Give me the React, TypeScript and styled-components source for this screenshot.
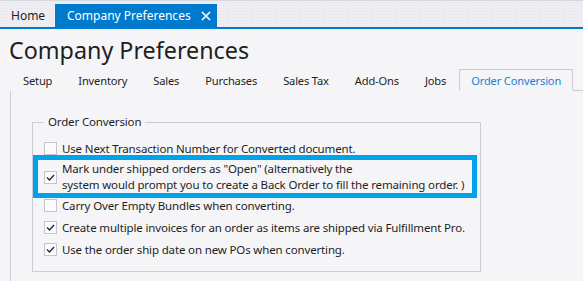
import React from "react";
import styled, { createGlobalStyle } from "styled-components";

const GlobalStyle = createGlobalStyle`
	body {
		margin: 0;
		background-color: #f5f5f7;
		font-family: "Noto Sans", "Open Sans", sans-serif;
		color: #1e1e1e;
		overflow: hidden;
		white-space: nowrap;
	}
`;

const subTabs = ["Setup", "Inventory", "Sales", "Purchases", "Sales Tax", "Add-Ons", "Jobs", "Order Conversion"];

const Check = ({ checked }: { checked: boolean }) => (
	<Box>
		{checked && (
			<svg width='11' height='11' viewBox='0 0 11 11'>
				<polyline points='2,5.5 4.5,8 9,3' fill='none' stroke='#2b2b2b' strokeWidth='1.4' />
			</svg>
		)}
	</Box>
);

const App = () => {
	return (
		<Page>
			<GlobalStyle />
			<TopBar>
				<DocTab>Home</DocTab>
				<DocTab active>
					Company Preferences
					<svg width='10' height='10' viewBox='0 0 10 10'>
						<path d='M1 1 L9 9 M9 1 L1 9' stroke='white' strokeWidth='1.6' />
					</svg>
				</DocTab>
			</TopBar>

			<Title>Company Preferences</Title>

			<TabRow>
				{subTabs.map((t) => (
					<SubTab key={t} active={t === "Order Conversion"}>
						{t}
					</SubTab>
				))}
			</TabRow>

			<Panel>
				<Group>
					<Legend>Order Conversion</Legend>
					<Row>
						<Check checked={false} />
						<span>Use Next Transaction Number for Converted document.</span>
					</Row>
					<Highlight>
						<Check checked />
						<span>
							Mark under shipped orders as "Open" (alternatively the
							<br />
							system would prompt you to create a Back Order to fill the remaining order. )
						</span>
					</Highlight>
					<Row>
						<Check checked={false} />
						<span>Carry Over Empty Bundles when converting.</span>
					</Row>
					<Row>
						<Check checked />
						<span>Create multiple invoices for an order as items are shipped via Fulfillment Pro.</span>
					</Row>
					<Row>
						<Check checked />
						<span>Use the order ship date on new POs when converting.</span>
					</Row>
				</Group>
			</Panel>
		</Page>
	);
};

export default App;

const Page = styled.div`
	width: 583px;
	height: 281px;
	display: flex;
	flex-direction: column;
	font-size: 11.5px;
	letter-spacing: -0.15px;
`;

const TopBar = styled.div`
	height: 26px;
	flex-shrink: 0;
	border-top: 1px solid #d6d6de;
	border-bottom: 2px solid #007acc;
	background-color: #eeeef2;
	background-image: radial-gradient(#e2e2e8 0.6px, transparent 0.6px);
	background-size: 3px 3px;
	display: flex;
	align-items: flex-end;
`;

const DocTab = styled.div<{ active?: boolean }>`
	height: 23px;
	display: flex;
	align-items: center;
	justify-content: space-between;
	padding: 0 ${(p) => (p.active ? "6px" : "12px")} 0 ${(p) => (p.active ? "12px" : "11px")};
	width: ${(p) => (p.active ? "162px" : "55px")};
	box-sizing: border-box;
	font-size: 12px;
	letter-spacing: 0;
	background-color: ${(p) => (p.active ? "#007acc" : "transparent")};
	color: ${(p) => (p.active ? "white" : "#1e1e1e")};
`;

const Title = styled.h1`
	margin: 5px 0 0 9px;
	font-size: 23.3px;
	font-weight: 400;
	letter-spacing: 0;
	line-height: 32px;
	color: #1e1e1e;
`;

const TabRow = styled.div`
	display: flex;
	margin: 3px 0 0 10px;
	height: 22px;
	flex-shrink: 0;
	position: relative;
	z-index: 1;
`;

const SubTab = styled.div<{ active?: boolean }>`
	padding: 0 ${(p) => (p.active ? "11px" : "12px")};
	display: flex;
	align-items: center;
	font-size: 11.1px;
	color: ${(p) => (p.active ? "#1a7fd0" : "#1e1e1e")};
	border: 1px solid ${(p) => (p.active ? "#ccccd6" : "transparent")};
	border-bottom: 1px solid ${(p) => (p.active ? "#f5f5f7" : "transparent")};
	background-color: #f5f5f7;
`;

const Panel = styled.div`
	flex: 1;
	margin: -1px 0 0 10px;
	border-top: 1px solid #ccccd6;
	border-left: 1px solid #ccccd6;
	padding: 23px 0 0 21px;
`;

const Group = styled.fieldset`
	width: 449px;
	box-sizing: border-box;
	height: 158px;
	margin: 0;
	padding: 7px 0 0 2px;
	border: 1px solid #ccccd6;
	display: flex;
	flex-direction: column;
`;

const Legend = styled.legend`
	padding: 0 4px;
	margin-left: 9px;
	line-height: 16px;
`;

const Row = styled.label`
	display: flex;
	align-items: center;
	flex-shrink: 0;
	gap: 5px;
	height: 22px;
	padding-left: 9px;
`;

const Highlight = styled.div`
	display: flex;
	align-items: center;
	flex-shrink: 0;
	gap: 5px;
	margin: -4px 0 -4px -2px;
	width: 444px;
	box-sizing: border-box;
	height: 43px;
	border: 5px solid #00a2e8;
	padding: 1px 0 0 6px;
	line-height: 16px;
	position: relative;
`;

const Box = styled.span`
	width: 13px;
	height: 13px;
	box-sizing: border-box;
	border: 1px solid #c4c4cc;
	background-color: #fbfbfd;
	display: flex;
	align-items: center;
	justify-content: center;
	flex-shrink: 0;
`;
